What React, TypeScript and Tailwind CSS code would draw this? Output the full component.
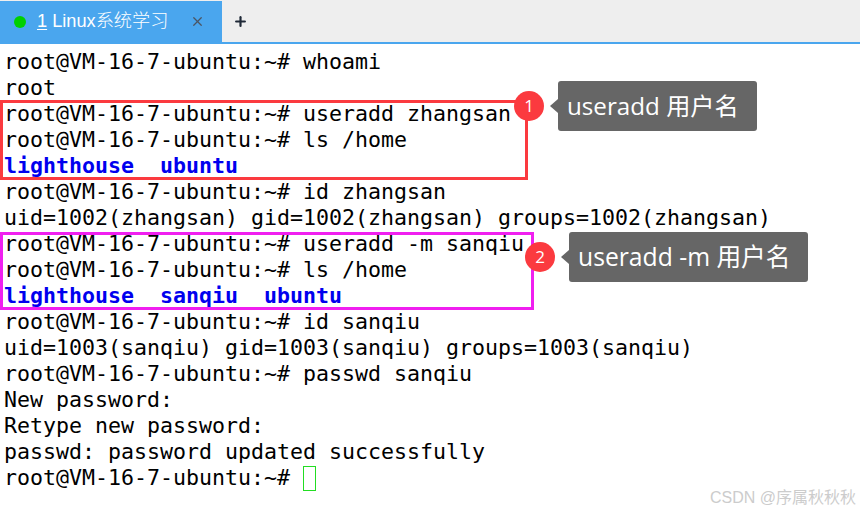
import React from "react";
import { Plus, X } from "lucide-react";

type Seg = { text: string; blue?: boolean };

const lines: Seg[] = [
  { text: "root@VM-16-7-ubuntu:~# whoami" },
  { text: "root" },
  { text: "root@VM-16-7-ubuntu:~# useradd zhangsan" },
  { text: "root@VM-16-7-ubuntu:~# ls /home" },
  { text: "lighthouse  ubuntu", blue: true },
  { text: "root@VM-16-7-ubuntu:~# id zhangsan" },
  { text: "uid=1002(zhangsan) gid=1002(zhangsan) groups=1002(zhangsan)" },
  { text: "root@VM-16-7-ubuntu:~# useradd -m sanqiu" },
  { text: "root@VM-16-7-ubuntu:~# ls /home" },
  { text: "lighthouse  sanqiu  ubuntu", blue: true },
  { text: "root@VM-16-7-ubuntu:~# id sanqiu" },
  { text: "uid=1003(sanqiu) gid=1003(sanqiu) groups=1003(sanqiu)" },
  { text: "root@VM-16-7-ubuntu:~# passwd sanqiu" },
  { text: "New password:" },
  { text: "Retype new password:" },
  { text: "passwd: password updated successfully" },
];

function Callout({ n, label, className, bubble }: { n: number; label: string; className: string; bubble: string }) {
  return (
    <div className={`absolute flex items-center h-[50px] ${className}`}>
      <div className="w-[30px] h-[30px] rounded-full bg-[#fb3a3f] text-white flex items-center justify-center text-[17px] font-['Open_Sans',sans-serif]">
        {n}
      </div>
      <div className="ml-[6px] w-0 h-0 border-y-[7px] border-y-transparent border-r-[8px] border-r-[#666666]" />
      <div className={`h-full rounded-[3px] bg-[#666666] text-white flex items-center pl-[9px] whitespace-nowrap font-['Open_Sans','Noto_Sans_CJK_SC',sans-serif] ${bubble}`}>
        {label}
      </div>
    </div>
  );
}

export default function App() {
  return (
    <div className="relative w-[860px] h-[511px] bg-white overflow-hidden">
      {/* tab bar */}
      <div className="flex h-[44px] pt-px bg-[#eeeeee] border-b-2 border-[#4aa6ee]">
        <div className="w-[222px] bg-[#4aa6ee] flex items-center pl-[14px] text-white">
          <span className="w-3 h-3 rounded-full bg-[#00d000]" />
          <span className="ml-[11px] text-[18.2px] font-['Liberation_Sans','Noto_Sans_CJK_SC',sans-serif] font-light">
            <span className="underline underline-offset-2">1</span> Linux系统学习
          </span>
          <X className="ml-[22px] w-[15px] h-[15px] text-[#4b5563]" strokeWidth={2} />
        </div>
        <div className="w-[36px] flex items-center justify-center">
          <Plus className="w-[15px] h-[15px] text-[#1f2937]" strokeWidth={3.5} />
        </div>
      </div>

      {/* terminal */}
      <div className="pt-[5px] pl-1 text-[21.6px] leading-[26px] text-black whitespace-pre font-['DejaVu_Sans_Mono',monospace]">
        {lines.map((l, i) => (
          <div key={i} className={l.blue ? "h-[26px] font-bold text-[#0000ee]" : "h-[26px]"}>
            {l.text}
          </div>
        ))}
        <div className="flex items-center h-[26px]">
          root@VM-16-7-ubuntu:~#
          <span className="ml-[13px] w-[13px] h-[25px] border border-[#22dd22]" />
        </div>
      </div>

      {/* highlight boxes */}
      <div className="absolute left-0 top-[100px] w-[528px] h-[80px] border-[3px] border-[#fb3a3f]" />
      <div className="absolute left-0 top-[232px] w-[534px] h-[78px] border-[3px] border-[#f01ff0]" />

      <Callout n={1} label="useradd 用户名" bubble="w-[199px] text-[24.2px]" className="left-[514px] top-[81px]" />
      <Callout n={2} label="useradd -m 用户名" bubble="w-[239px] text-[24.7px]" className="left-[525px] top-[232px]" />

      <div className="absolute right-[4px] top-[486px] text-[16px] text-[#cccccc] font-['Liberation_Sans','Noto_Sans_CJK_SC',sans-serif]">
        CSDN @序属秋秋秋
      </div>
    </div>
  );
}
